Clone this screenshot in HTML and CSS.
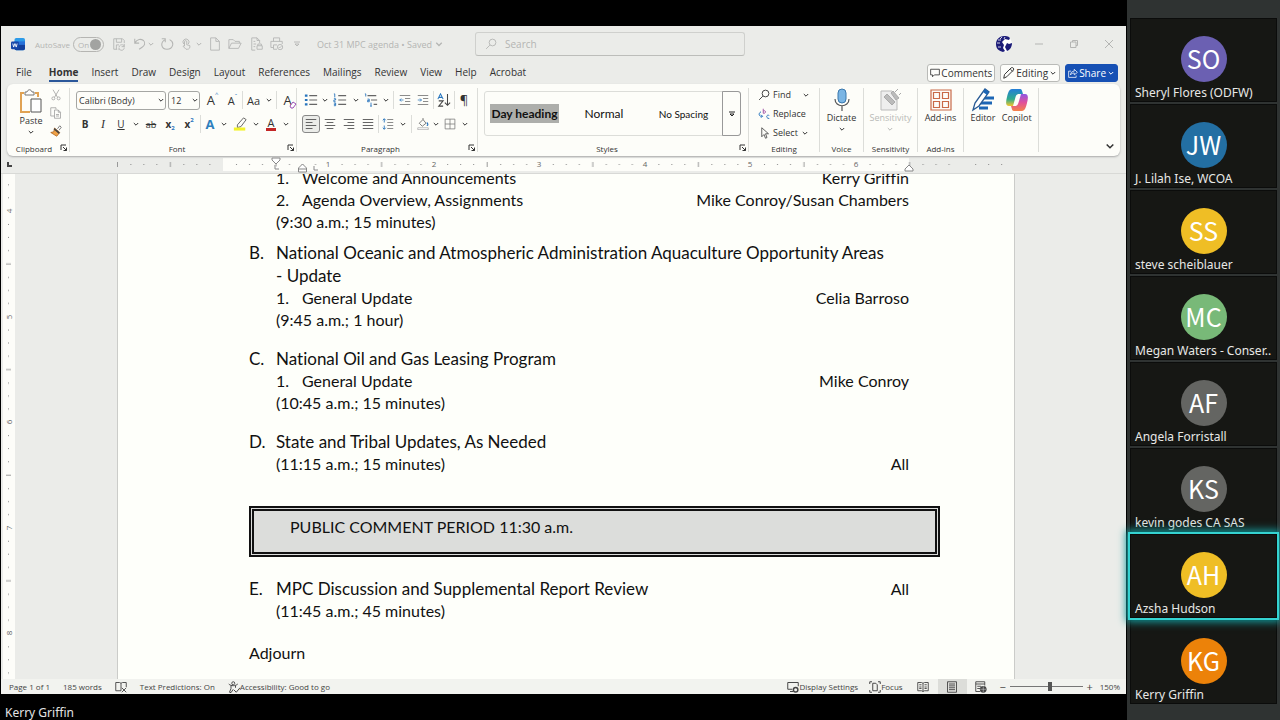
FILE: index.html
```html
<!DOCTYPE html>
<html lang="en">
<head>
<meta charset="utf-8">
<title>Oct 31 MPC agenda</title>
<link rel="stylesheet" href="styles.css">
</head>
<body>
<svg class="defs" aria-hidden="true">
  <symbol id="chev" viewBox="0 0 8 8"><path d="M1.800 3 4 5.200 6.200 3" fill="none" stroke="currentColor" stroke-width="1"/></symbol>
  <symbol id="launch" viewBox="0 0 8 8"><path d="M1 6V1h5M3 3l3.500 3.500M6.500 3.500v3h-3" fill="none" stroke="currentColor"/></symbol>
  <symbol id="save" viewBox="0 0 16 16"><path d="M6 14H2V2h10l2 2v3M5 2v4h6V2M5 14V9h3M8 12c0-4 6-4 6-1M14 8v3h-3M14 12c0 4-5 4-6 1M8 15v-2" fill="none" stroke="currentColor"/></symbol>
  <symbol id="undo" viewBox="0 0 16 16"><path d="M2 2v5h5M2 7c3-5 7-5 10-3 3 3 1 6-2 8l-3 2" fill="none" stroke="currentColor" stroke-width="1.200"/></symbol>
  <symbol id="redo" viewBox="0 0 16 16"><path d="M2 2h4v4M6 3C0 6 1 14 8 14s9-8 3-11" fill="none" stroke="currentColor" stroke-width="1.200"/></symbol>
  <symbol id="touch" viewBox="0 0 16 16"><path d="M5 8a4 4 0 1 1 6 0M6 11V5c0-2 3-2 3 0v4l4 1c1 3-1 5-3 5H8l-4-4 2-1" fill="none" stroke="currentColor" stroke-width="1.200"/></symbol>
  <symbol id="page" viewBox="0 0 16 16"><path d="M3 1h6l4 4v10H3zM9 1v4h4" fill="none" stroke="currentColor"/></symbol>
  <symbol id="folder" viewBox="0 0 16 16"><path d="M1 13V3h5l2 2h5v2M1 13 4 7h11l-3 6z" fill="none" stroke="currentColor"/></symbol>
  <symbol id="preview" viewBox="0 0 16 16"><path d="M6 15H2V1h6l3 3v3M8 1v3h3M4 5h2M4 8h3M8 10h6v4H8zM9 10V8h4v2M4 11h2" fill="none" stroke="currentColor"/></symbol>
  <symbol id="print" viewBox="0 0 16 16"><path d="M4 5V1h7v4M4 12H1V5h13v3M4 9h4M4 9v5h4" fill="none" stroke="currentColor"/><circle cx="11.500" cy="11.500" r="3" fill="none" stroke="currentColor"/><path d="m10 11.500 1 1 2-2" fill="none" stroke="currentColor"/></symbol>
  <symbol id="more" viewBox="0 0 8 8"><path d="M1 2h6M2 4h4L4 6z" fill="none" stroke="currentColor" stroke-width=".9"/></symbol>
  <symbol id="lens" viewBox="0 0 16 16"><circle cx="10" cy="6" r="4.500" fill="none" stroke="currentColor" stroke-width="1.200"/><path d="m6.500 9.500-5 5" stroke="currentColor" stroke-width="1.200"/></symbol>
  <symbol id="scissors" viewBox="0 0 16 16"><path d="m4 1 6 10M12 1 6 11" stroke="currentColor"/><circle cx="4.500" cy="12.500" r="2" fill="none" stroke="currentColor"/><circle cx="11.500" cy="12.500" r="2" fill="none" stroke="currentColor"/></symbol>
  <symbol id="copy" viewBox="0 0 16 16"><path d="M6 12H1V1h7v2M6 4h5l3 3v8H6zM11 4v3h3M8 10h4M8 12h4" fill="none" stroke="currentColor"/></symbol>
  <symbol id="brush" viewBox="0 0 16 16"><path d="m10 5 3-4 2 2-3 4" fill="#fff" stroke="#555"/><path d="M6 4 13 10 9 15 1 10l4-1z" fill="#f0a247" stroke="#a9601c"/><path d="m6 4 7 6-1 2-7-6z" fill="#444"/></symbol>
  <symbol id="paste" viewBox="0 0 26 26"><path d="M6 4H3v19h9M17 4h3v4" fill="none" stroke="#e0a254" stroke-width="2"/><path d="M7 6V3h2c1-3 4-3 5 0h2v3z" fill="#fff" stroke="#777"/><path d="M13 10h10v13H13z" fill="#fff" stroke="#555"/></symbol>
  <symbol id="bullets" viewBox="0 0 16 16"><path d="M6 3h9M6 8h9M6 13h9" stroke="#666" stroke-width="1.200"/><path d="M1 3h3M1 8h3M1 13h3" stroke="#2774bd" stroke-width="2.500"/></symbol>
  <symbol id="numbers" viewBox="0 0 16 16"><path d="M6 3h9M6 8h9M6 13h9" stroke="#666" stroke-width="1.200"/><path d="M1 1h1v4M1 6.500h2v1.500H1v2h2M1 11.500h2v3H1M1 13h2" fill="none" stroke="#2774bd"/></symbol>
  <symbol id="multi" viewBox="0 0 16 16"><path d="M4 3h10M8 8h7M11 13h4" stroke="#666" stroke-width="1.200"/><path d="M1 1h1v3M4 7h2v3H4V8.500h2M8 11v4M9 15H7" fill="none" stroke="#2774bd"/></symbol>
  <symbol id="outdent" viewBox="0 0 16 16"><path d="M1 2h14M8 6h7M8 10h7M1 14h14" stroke="#666"/><path d="M6 8H1M3 6 1 8l2 2" fill="none" stroke="#2774bd"/></symbol>
  <symbol id="indent" viewBox="0 0 16 16"><path d="M1 2h14M8 6h7M8 10h7M1 14h14" stroke="#666"/><path d="M1 8h5M4 6l2 2-2 2" fill="none" stroke="#2774bd"/></symbol>
  <symbol id="sort" viewBox="0 0 16 16"><path d="m1 7 3-6 3 6M2 5h4" fill="none" stroke="#2774bd" stroke-width="1.200"/><path d="M2 9h5l-5 6h5M12 1v13M9 11l3 3 3-3" fill="none" stroke="#444" stroke-width="1.200"/></symbol>
  <symbol id="al" viewBox="0 0 16 16"><path d="M1 2h14M1 6h9M1 10h14M1 14h9" stroke="#555" stroke-width="1.200"/></symbol>
  <symbol id="ac" viewBox="0 0 16 16"><path d="M1 2h14M3.500 6h9M1 10h14M3.500 14h9" stroke="#555" stroke-width="1.200"/></symbol>
  <symbol id="ar" viewBox="0 0 16 16"><path d="M1 2h14M6 6h9M1 10h14M6 14h9" stroke="#555" stroke-width="1.200"/></symbol>
  <symbol id="aj" viewBox="0 0 16 16"><path d="M1 2h14M1 6h14M1 10h14M1 14h14" stroke="#555" stroke-width="1.200"/></symbol>
  <symbol id="spacing" viewBox="0 0 16 16"><path d="M7 2h8M7 6h8M7 10h8M7 14h8" stroke="#666"/><path d="M3 1v5M3 10v5M1 3l2-2 2 2M1 13l2 2 2-2" fill="none" stroke="#2774bd" stroke-width="1.200"/></symbol>
  <symbol id="shade" viewBox="0 0 16 16"><path d="m3 7 5-5 4 5-5 4zM8 2V0" fill="none" stroke="#555"/><path d="M13 6c2 2 2 4 0 4" fill="none" stroke="#2774bd" stroke-width="1.500"/><path d="M1 13h14v2.500H1z" fill="#fff" stroke="#888" stroke-width=".7"/></symbol>
  <symbol id="borders" viewBox="0 0 16 16"><path d="M1.500 1.500h13v13h-13zM8 1.500v13M1.500 8h13" fill="none" stroke="#777"/></symbol>
  <symbol id="replace" viewBox="0 0 16 16"><path d="M7 1v6M7 4c4-2 4 4 0 3" fill="none" stroke="#a457a8" stroke-width="1.300"/><path d="M4 5C0 7 1 12 6 11M4 9l2 2-2 2M15 10c-4-2-5 4 0 4" fill="none" stroke="#2774bd" stroke-width="1.300"/></symbol>
  <symbol id="cursor" viewBox="0 0 16 16"><path d="M5 1v12l3-3 2 5 2-1-2-5h4z" fill="none" stroke="#444" stroke-width="1.100"/></symbol>
  <symbol id="mic" viewBox="0 0 24 24"><rect x="8" y="1" width="8" height="14" rx="4" fill="#7ab5e4" stroke="#3a78ad"/><path d="M5 11c0 9 14 9 14 0M12 18v5" fill="none" stroke="#555" stroke-width="1.200"/></symbol>
  <symbol id="sens" viewBox="0 0 24 24"><path d="M14 3H3v19h16V12" fill="#eee" stroke="#bbb"/><path d="m6 9 3-3 8 8-3 3zM13 5l2-2 6 7-3 2zM17 4l3-3M21 7l2-2" fill="#bbb" stroke="#aaa"/></symbol>
  <symbol id="addins" viewBox="0 0 24 24"><path d="M2 2h20v20H2z M4.500 4.500h6v6h-6z M13.500 4.500h6v6h-6z M4.500 13.500h6v6h-6z M13.500 13.500h6v6h-6z" fill="none" stroke="#c96a48" stroke-width="1.200"/></symbol>
  <symbol id="editor" viewBox="0 0 24 24"><path d="M12 10h11M9 15h12M8 20h9" stroke="#1d66b5" stroke-width="3"/><path d="M2 22 4 15 14 1l4 3L8 18z" fill="#fff" stroke="#285a94" stroke-width="1.300"/><path d="m14 1 4 3-2 3-4-3z" fill="#1d66b5"/></symbol>
  <linearGradient id="cg1" x1="0" y1="0" x2="0" y2="1"><stop stop-color="#247ed8"/><stop offset=".6" stop-color="#2fac8c"/><stop offset="1" stop-color="#f5c52c"/></linearGradient>
  <linearGradient id="cg2" x1="0" y1="0" x2="0" y2="1"><stop stop-color="#8e57e3"/><stop offset=".5" stop-color="#e0509b"/><stop offset="1" stop-color="#f58148"/></linearGradient>
  <symbol id="copilot" viewBox="0 0 24 24"><path d="M7 1h8c2 0 2 2 3 5h-4c-2 0-3 1-4 5l-2 7H4c-4 0-3-5-2-9s2-8 5-8z" fill="url(#cg1)"/><path d="M17 23H9c-2 0-2-2-3-5h4c2 0 3-1 4-5l2-7h4c4 0 3 5 2 9s-2 8-5 8z" fill="url(#cg2)"/></symbol>
  <symbol id="comment" viewBox="0 0 16 16"><path d="M1 2h14v9H7l-3 3v-3H1z" fill="none" stroke="currentColor" stroke-width="1.300"/></symbol>
  <symbol id="pencil" viewBox="0 0 16 16"><path d="m1 15 1-5 9-9c2-1 4 1 3 3l-9 9zM10 3l3 3" fill="none" stroke="currentColor" stroke-width="1.300"/></symbol>
  <symbol id="share" viewBox="0 0 16 16"><path d="M5 5H1v10h12v-3M4 11c0-4 3-6 6-6V2l5 5-5 4V8C7 8 5 9 4 11z" fill="none" stroke="currentColor" stroke-width="1.200"/></symbol>
  <symbol id="proof" viewBox="0 0 16 16"><path d="M8 3v10M8 13H1V2h5l2 1 2-1h5v6M9 9l6 6M15 9l-6 6" fill="none" stroke="currentColor" stroke-width="1.200"/></symbol>
  <symbol id="access" viewBox="0 0 16 16"><circle cx="7" cy="3" r="2" fill="none" stroke="currentColor" stroke-width="1.200"/><path d="M1 4c3 3 9 3 12 0M4 6v4l-2 5 2 .5L7 11M10 6v3M8 12l3 3 5-6" fill="none" stroke="currentColor" stroke-width="1.300"/></symbol>
  <symbol id="display" viewBox="0 0 16 16"><path d="M7 11H1V2h14v5M4 14h4" fill="none" stroke="currentColor" stroke-width="1.300"/><circle cx="11.500" cy="11.500" r="3" fill="none" stroke="currentColor" stroke-width="2"/></symbol>
  <symbol id="focus" viewBox="0 0 16 16"><path d="M1 4V1h3M12 1h3v3M1 12v3h3M12 15h3v-3M5 3h4l2 2v8H5z" fill="none" stroke="currentColor" stroke-width="1.300"/></symbol>
  <symbol id="book" viewBox="0 0 16 16"><path d="M8 3v11M1 2h5l2 1 2-1h5v11h-5l-2 1-2-1H1zM3 5h3M3 8h3M3 10h3M10 5h3M10 8h3M10 10h3" fill="none" stroke="currentColor" stroke-width="1.200"/></symbol>
  <symbol id="layout" viewBox="0 0 16 16"><path d="M2 1h12v14H2zM4 4h8M4 6.500h8M4 9h8M4 11.500h8" fill="none" stroke="currentColor" stroke-width="1.200"/></symbol>
  <symbol id="web" viewBox="0 0 16 16"><path d="M7 14H1V1h12v5M1 4h12M3 7h5M3 10h4" fill="none" stroke="currentColor" stroke-width="1.200"/><circle cx="11" cy="11" r="4.500" fill="currentColor"/><path d="M11 7v8M7 11h8" stroke="#ddd" stroke-width=".7"/></symbol>
</svg>

<div class="meeting">
  <main class="stage">
    <div class="word">
      <header class="titlebar">
        <div class="quick">
          <svg class="logo" viewBox="0 0 16 16"><rect x="4" y="1" width="12" height="14" rx="2" fill="#2d9be8"/><path d="M4 8h12v5a2 2 0 0 1-2 2H6a2 2 0 0 1-2-2z" fill="#123f9c"/><path d="M4 5h12v4H4z" fill="#2770d8"/><rect x="0" y="5" width="9" height="9" rx="1.500" fill="#1446a8"/><path d="m2 7.500 1 4 1.500-4 1.500 4 1-4" fill="none" stroke="#fff"/></svg>
          <label class="autosave" for="autosave">AutoSave</label>
          <button class="toggle" id="autosave">On<span class="knob"></span></button>
          <button aria-label="Save"><svg class="i14"><use href="#save"/></svg></button>
          <button aria-label="Undo"><svg class="i14"><use href="#undo"/></svg></button>
          <button aria-label="Undo list"><svg class="i8"><use href="#chev"/></svg></button>
          <button aria-label="Redo"><svg class="i14"><use href="#redo"/></svg></button>
          <button aria-label="Touch mode"><svg class="i12"><use href="#touch"/></svg></button>
          <button aria-label="Touch list"><svg class="i8"><use href="#chev"/></svg></button>
          <button aria-label="New"><svg class="i14"><use href="#page"/></svg></button>
          <button aria-label="Open"><svg class="i14"><use href="#folder"/></svg></button>
          <button aria-label="Preview"><svg class="i14"><use href="#preview"/></svg></button>
          <button aria-label="Print"><svg class="i14"><use href="#print"/></svg></button>
          <button aria-label="Customize"><svg class="i8"><use href="#more"/></svg></button>
          <button class="doc-title">Oct 31 MPC agenda • Saved <svg class="i10"><use href="#chev"/></svg></button>
        </div>
        <div class="search"><svg class="i12"><use href="#lens"/></svg><input type="text" placeholder="Search" aria-label="Search"></div>
        <div class="window-buttons">
          <svg class="user" viewBox="0 0 18 18"><circle cx="9" cy="9" r="8" fill="#fff"/><path d="M9 1C5 1 1 4 1 9s3 7 7 8l2-1-2-3 1-3-2-3 3-3 4 1 1-2C13 1 11 1 9 1z" fill="#1c1c78"/><path d="m12 8 2 1 3-1c0 4-2 7-5 8l-2-4z" fill="#1c1c78"/><path d="M3 5h3M2 8h3M3 12h3M7 2 5 4M10 2l-1 2" stroke="#fff" stroke-width=".8"/></svg>
          <button aria-label="Minimize"><svg viewBox="0 0 10 10"><path d="M1 5h8" stroke="currentColor"/></svg></button>
          <button aria-label="Restore"><svg viewBox="0 0 10 10"><path d="M1.500 3h5.500v5.500H1.500zM3.500 3V1.500H8.500v5H7" fill="none" stroke="currentColor"/></svg></button>
          <button aria-label="Close"><svg viewBox="0 0 10 10"><path d="m1 1 8 8M9 1 1 9" stroke="currentColor"/></svg></button>
        </div>
      </header>

      <nav class="tabs">
        <a href="#">File</a><a href="#" class="active">Home</a><a href="#">Insert</a><a href="#">Draw</a><a href="#">Design</a><a href="#">Layout</a><a href="#">References</a><a href="#">Mailings</a><a href="#">Review</a><a href="#">View</a><a href="#">Help</a><a href="#">Acrobat</a>
        <div class="tab-actions">
          <button class="outlined"><svg class="i10"><use href="#comment"/></svg>Comments</button>
          <button class="outlined"><svg class="i12"><use href="#pencil"/></svg>Editing<svg class="i8"><use href="#chev"/></svg></button>
          <button class="outlined share"><svg class="i10"><use href="#share"/></svg>Share<svg class="i8"><use href="#chev"/></svg></button>
        </div>
      </nav>

      <section class="ribbon">
        <div class="group clipboard">
          <div class="clip-body">
            <button class="big"><svg class="i26"><use href="#paste"/></svg>Paste<svg class="i8"><use href="#chev"/></svg></button>
            <div class="clip-side">
              <button aria-label="Cut" class="dim"><svg class="i12"><use href="#scissors"/></svg></button>
              <button aria-label="Copy" class="dim"><svg class="i12"><use href="#copy"/></svg></button>
              <button aria-label="Format painter"><svg class="i12"><use href="#brush"/></svg></button>
            </div>
          </div>
          <div class="caption">Clipboard<svg class="i8"><use href="#launch"/></svg></div>
        </div>
        <div class="group font">
          <div class="row font-one">
            <div class="combo"><select aria-label="Font"><option>Calibri (Body)</option></select><svg class="i8"><use href="#chev"/></svg></div>
            <div class="combo"><select aria-label="Font size"><option>12</option></select><svg class="i8"><use href="#chev"/></svg></div>
            <button class="letter">A<sup>^</sup></button>
            <button class="letter small">A<sup>ˇ</sup></button>
            <i class="sep"></i>
            <button class="letter small">Aa</button>
            <button aria-label="Case list"><svg class="i8"><use href="#chev"/></svg></button>
            <i class="sep"></i>
            <button class="letter eraser">A<svg class="i8" viewBox="0 0 8 8"><path d="m1 5 3-4 3 2-3 4H2z" fill="#fff" stroke="#9a4fb5"/></svg></button>
          </div>
          <div class="row font-two">
            <button class="b">B</button><button class="it">I</button><button class="u">U</button>
            <button aria-label="Underline list"><svg class="i8"><use href="#chev"/></svg></button>
            <button class="st">ab</button><button class="b">x<sub>2</sub></button><button class="b">x<sup>2</sup></button>
            <i class="sep"></i>
            <button class="effect">A</button>
            <button aria-label="Effects list"><svg class="i8"><use href="#chev"/></svg></button>
            <button aria-label="Highlight"><svg class="i14" viewBox="0 0 16 16"><path d="m5 9 7-8 3 2-6 8-4 1z" fill="none" stroke="#555"/><path d="M1 12h13v3.500H1z" fill="#f3f32a"/></svg></button>
            <button aria-label="Highlight list"><svg class="i8"><use href="#chev"/></svg></button>
            <button class="color">A</button>
            <button aria-label="Color list"><svg class="i8"><use href="#chev"/></svg></button>
          </div>
          <div class="caption">Font<svg class="i8"><use href="#launch"/></svg></div>
        </div>
        <div class="group paragraph">
          <div class="row para-one">
            <button aria-label="Bullets"><svg class="i14"><use href="#bullets"/></svg></button><button aria-label="Bullets list"><svg class="i8"><use href="#chev"/></svg></button>
            <button aria-label="Numbering"><svg class="i14"><use href="#numbers"/></svg></button><button aria-label="Numbering list"><svg class="i8"><use href="#chev"/></svg></button>
            <button aria-label="Multilevel"><svg class="i14"><use href="#multi"/></svg></button><button aria-label="Multilevel list"><svg class="i8"><use href="#chev"/></svg></button>
            <i class="sep"></i>
            <button aria-label="Decrease indent"><svg class="i12"><use href="#outdent"/></svg></button>
            <button aria-label="Increase indent"><svg class="i12"><use href="#indent"/></svg></button>
            <i class="sep"></i>
            <button aria-label="Sort"><svg class="i14"><use href="#sort"/></svg></button>
            <i class="sep"></i>
            <button class="letter">¶</button>
          </div>
          <div class="row para-two">
            <button class="pressed" aria-label="Left"><svg class="i12"><use href="#al"/></svg></button>
            <button aria-label="Center"><svg class="i12"><use href="#ac"/></svg></button>
            <button aria-label="Right"><svg class="i12"><use href="#ar"/></svg></button>
            <button aria-label="Justify"><svg class="i12"><use href="#aj"/></svg></button>
            <i class="sep"></i>
            <button aria-label="Line spacing"><svg class="i12"><use href="#spacing"/></svg></button><button aria-label="Spacing list"><svg class="i8"><use href="#chev"/></svg></button>
            <i class="sep"></i>
            <button aria-label="Shading"><svg class="i12"><use href="#shade"/></svg></button><button aria-label="Shading list"><svg class="i8"><use href="#chev"/></svg></button>
            <button aria-label="Borders"><svg class="i12"><use href="#borders"/></svg></button><button aria-label="Borders list"><svg class="i8"><use href="#chev"/></svg></button>
          </div>
          <div class="caption">Paragraph<svg class="i8"><use href="#launch"/></svg></div>
        </div>
        <div class="group styles">
          <div class="gallery">
            <button class="day"><span>Day heading</span></button><button>Normal</button><button class="nosp">No Spacing</button>
            <button class="expand" aria-label="More styles"><svg class="i8"><use href="#more"/></svg></button>
          </div>
          <div class="caption">Styles<svg class="i8"><use href="#launch"/></svg></div>
        </div>
        <div class="group editing">
          <div class="edit-list">
            <button><svg class="i12"><use href="#lens"/></svg>Find<svg class="i8 far"><use href="#chev"/></svg></button>
            <button><svg class="i12"><use href="#replace"/></svg>Replace</button>
            <button><svg class="i12"><use href="#cursor"/></svg>Select<svg class="i8"><use href="#chev"/></svg></button>
          </div>
          <div class="caption">Editing</div>
        </div>
        <div class="group voice"><button class="big"><svg class="i24"><use href="#mic"/></svg>Dictate<svg class="i8"><use href="#chev"/></svg></button><div class="caption">Voice</div></div>
        <div class="group sensitivity"><button class="big faded"><svg class="i24"><use href="#sens"/></svg>Sensitivity<svg class="i8"><use href="#chev"/></svg></button><div class="caption">Sensitivity</div></div>
        <div class="group addins"><button class="big"><svg class="i24"><use href="#addins"/></svg>Add-ins</button><div class="caption">Add-ins</div></div>
        <div class="group tools">
          <div class="tools-body"><button class="big"><svg class="i24"><use href="#editor"/></svg>Editor</button><button class="big"><svg class="i24"><use href="#copilot"/></svg>Copilot</button></div>
        </div>
        <button class="collapse" aria-label="Collapse ribbon"><svg class="i12"><use href="#chev"/></svg></button>
      </section>

      <svg class="ruler" aria-hidden="true">
        <defs><pattern id="ticks" x="222" y="0" width="105.600" height="16" patternUnits="userSpaceOnUse"><path d="M13 7.500h1M26 7.500h1M39 7.500h1M66 7.500h1M79 7.500h1M92 7.500h1" stroke="#888"/><path d="M53 5v5" stroke="#999"/></pattern></defs>
        <rect x="222" y="1" width="686" height="13" fill="#fdfdf9"/>
        <rect x="118" y="0" width="888" height="16" fill="url(#ticks)"/>
        <path d="M116.500 5v5" stroke="#999"/>
        <path d="M7 5v4h4" fill="none" stroke="#444" stroke-width="2"/>
        <g class="nums"><text x="327" y="10">1</text><text x="433" y="10">2</text><text x="538" y="10">3</text><text x="644" y="10">4</text><text x="749" y="10">5</text><text x="855" y="10">6</text></g>
        <path d="M271 1h8v2l-4 4-4-4zM274 8v4h4M297.500 15v-4l4-4 4 4v4zM297.500 12h8M313 9v4h4M904 12l4-4 4 4v2h-8z" fill="#fff" stroke="#888"/>
      </svg>

      <div class="canvas">
        <svg class="vruler" aria-hidden="true">
          <defs><pattern id="vticks" x="0" y="37" width="12" height="105.600" patternUnits="userSpaceOnUse"><path d="M5 13.500h1M5 26.500h1M5 39.500h1M5 66.500h1M5 79.500h1M5 92.500h1" stroke="#888"/><path d="M3 53h5" stroke="#999"/></pattern></defs>
          <rect width="12" height="1000" fill="url(#vticks)"/>
          <g class="nums"><text transform="translate(9 37) rotate(-90)">4</text><text transform="translate(9 143) rotate(-90)">5</text><text transform="translate(9 248) rotate(-90)">6</text><text transform="translate(9 354) rotate(-90)">7</text><text transform="translate(9 459) rotate(-90)">8</text></g>
        </svg>
        <article class="paper">
          <section class="block">
            <p class="item"><span>1.</span><span>Welcome and Announcements</span><span class="who">Kerry Griffin</span></p>
            <p class="item"><span>2.</span><span>Agenda Overview, Assignments</span><span class="who">Mike Conroy/Susan Chambers</span></p>
            <p class="time">(9:30 a.m.; 15 minutes)</p>
          </section>
          <section class="block near">
            <h2><span>B.</span><span>National Oceanic and Atmospheric Administration Aquaculture Opportunity Areas <span class="keep">- Update</span></span></h2>
            <p class="item"><span>1.</span><span>General Update</span><span class="who">Celia Barroso</span></p>
            <p class="time">(9:45 a.m.; 1 hour)</p>
          </section>
          <section class="block spaced">
            <h2><span>C.</span><span>National Oil and Gas Leasing Program</span></h2>
            <p class="item"><span>1.</span><span>General Update</span><span class="who">Mike Conroy</span></p>
            <p class="time">(10:45 a.m.; 15 minutes)</p>
          </section>
          <section class="block spaced">
            <h2><span>D.</span><span>State and Tribal Updates, As Needed</span></h2>
            <p class="time">(11:15 a.m.; 15 minutes)<span class="who">All</span></p>
          </section>
          <p class="public">PUBLIC COMMENT PERIOD 11:30 a.m.</p>
          <section class="block after-box">
            <h2><span>E.</span><span>MPC Discussion and Supplemental Report Review</span><span class="who">All</span></h2>
            <p class="time">(11:45 a.m.; 45 minutes)</p>
          </section>
          <p class="adjourn">Adjourn</p>
        </article>
      </div>

      <footer class="status">
        <span>Page 1 of 1</span><span>185 words</span><svg class="i12"><use href="#proof"/></svg><span>Text Predictions: On</span>
        <span class="with-icon"><svg class="i12"><use href="#access"/></svg>Accessibility: Good to go</span>
        <div class="status-right">
          <button class="display"><svg class="i12"><use href="#display"/></svg>Display Settings</button>
          <button class="focus"><svg class="i12"><use href="#focus"/></svg>Focus</button>
          <button class="view" aria-label="Read mode"><svg class="i12"><use href="#book"/></svg></button>
          <button class="view on" aria-label="Print layout"><svg class="i12"><use href="#layout"/></svg></button>
          <button class="view" aria-label="Web layout"><svg class="i12"><use href="#web"/></svg></button>
          <button class="step">−</button><input type="range" min="0" max="100" value="56" aria-label="Zoom"><button class="step">+</button>
          <span class="percent">150%</span>
        </div>
      </footer>
    </div>
    <div class="speaker">Kerry Griffin</div>
  </main>

  <aside class="people">
    <div class="tile"><span class="avatar purple">SO</span><span class="name">Sheryl Flores (ODFW)</span></div>
    <div class="tile"><span class="avatar blue">JW</span><span class="name">J. Lilah Ise, WCOA</span></div>
    <div class="tile"><span class="avatar yellow">SS</span><span class="name">steve scheiblauer</span></div>
    <div class="tile"><span class="avatar green">MC</span><span class="name">Megan Waters - Conser..</span></div>
    <div class="tile"><span class="avatar gray">AF</span><span class="name">Angela Forristall</span></div>
    <div class="tile"><span class="avatar gray">KS</span><span class="name">kevin godes CA SAS</span></div>
    <div class="tile talking"><span class="avatar yellow">AH</span><span class="name">Azsha Hudson</span></div>
    <div class="tile"><span class="avatar orange">KG</span><span class="name">Kerry Griffin</span></div>
  </aside>
</div>
</body>
</html>
```
FILE: styles.css
```css
* { box-sizing: border-box; }
body { margin: 0; background: #000; font-family: "Open Sans", "Noto Sans", sans-serif; font-size: 10px; color: #333; }
button, input, select { font: inherit; color: inherit; background: none; border: 0; padding: 0; margin: 0; }
button { display: flex; align-items: center; justify-content: center; white-space: nowrap; }
p, h2 { margin: 0; font-weight: 400; }
a { color: inherit; text-decoration: none; }
svg { flex: none; display: block; }
.defs { position: absolute; width: 0; height: 0; }
.i8 { width: 8px; height: 8px; }
.i10 { width: 10px; height: 10px; }
.i12 { width: 12px; height: 12px; }
.i14 { width: 14px; height: 14px; }
.i24 { width: 24px; height: 24px; }
.i26 { width: 26px; height: 26px; }

.meeting { display: flex; height: 100vh; overflow: hidden; }
.stage { flex: 1; min-width: 0; display: flex; flex-direction: column; padding-top: 26px; }
.word { flex: 1; min-height: 0; display: flex; flex-direction: column; background: #ebece9; margin: 0 1px; overflow: hidden; }
.speaker { height: 26px; padding: 10px 5px 0; font: 12px/17px "Noto Sans", sans-serif; color: #e4e4e4; }

.titlebar { display: flex; align-items: center; height: 36px; color: #b4b5b3; }
.quick { display: grid; grid-template-columns: 26px 38px 31px 29px 14px 8px 24px 13px 13px 19px 22px 22px 17px 24px 1fr; width: 474px; padding-left: 8px; align-items: center; flex: none; }
.logo { width: 14px; height: 14px; margin-left: 2px; }
.autosave { font-size: 8px; }
.toggle { height: 15px; border: 1px solid #b5b5b2; border-radius: 8px; font-size: 8px; justify-content: space-between; padding: 0 2px 0 4px; }
.knob { width: 11px; height: 11px; border-radius: 50%; background: #a2a3a1; }
.doc-title { justify-content: flex-start; padding-left: 8px; gap: 2px; font-size: 9px; }
.search { display: flex; align-items: center; gap: 8px; flex: 0 1 270px; height: 24px; padding: 0 9px; border: 1px solid #cfd0cd; border-bottom-color: #bcbdba; border-radius: 3px; }
.search input { min-width: 0; flex: 1; }
.search input::placeholder { color: #b4b5b3; opacity: 1; }
.window-buttons { display: flex; align-items: center; margin-left: auto; }
.window-buttons button { width: 35px; height: 20px; }
.window-buttons button svg { width: 10px; height: 10px; }
.user { width: 18px; height: 18px; margin-right: 8px; }

.tabs { display: flex; align-items: center; gap: 13px; height: 22px; padding: 0 8px 0 15px; }
.tabs a { line-height: 16px; border-bottom: 2px solid transparent; }
.tabs .active { font-weight: 700; border-color: #2b579a; margin-left: 4px; }
.tab-actions { display: flex; gap: 5px; margin-left: auto; }
.outlined { height: 18px; padding: 0 2px; gap: 1px; border: 1px solid #b9bab7; border-radius: 3px; background: #fdfdfa; }
.share { color: #fff; background: #1650b4; border-color: #1650b4; }

.ribbon { display: flex; height: 72px; margin: 0 6px; padding-top: 4px; background: #fdfdf9; border-radius: 6px; box-shadow: 0 1px 2px #aaa; flex: none; z-index: 1; }
.group { position: relative; display: flex; flex-direction: column; flex: none; border-right: 1px solid #dcddd9; height: 64px; }
.clipboard { width: 63px; }
.font { width: 227px; padding-left: 6px; }
.paragraph { width: 181px; padding-left: 5px; }
.styles { width: 271px; padding-left: 6px; }
.editing { width: 71px; padding-left: 9px; }
.voice { width: 44px; }
.sensitivity { width: 54px; }
.addins { width: 46px; }
.tools { width: 75px; }
.tools-body { display: flex; justify-content: space-evenly; }
.caption { display: flex; justify-content: center; align-items: center; margin-top: auto; font-size: 8px; line-height: 10px; height: 7px; }
.caption svg { position: absolute; right: 1px; bottom: 0; }
.clipboard .caption { padding-right: 8px; }
.font .caption, .paragraph .caption, .styles .caption { padding-right: 18px; }
.editing .caption { padding-right: 9px; }
.row { display: grid; align-items: center; justify-items: center; height: 24px; }
.sep { width: 1px; height: 18px; background: #dcddd9; }
.clip-body { display: flex; padding-left: 11px; }
.clip-side { display: flex; flex-direction: column; gap: 6px; padding: 1px 0 0 6px; }
.dim { color: #999; }
.big { display: flex; flex-direction: column; align-self: center; font-size: 9px; line-height: 12px; }
.big .i8 { margin-top: 1px; }
.faded { color: #b9bab7; }
.font-one { grid-template-columns: 92px 34px 21px 19px 1px 21px 9px 7px 20px; }
.font-two { grid-template-columns: 18px 18px 18px 12px 18px 20px 18px 4px 16px 12px 20px 12px 18px 12px; }
.para-one { grid-template-columns: 18px 9px 22px 9px 21px 9px 6px 17px 19px 3px 18px 2px 18px; }
.para-two { grid-template-columns: 18px 19px 19px 19px 2px 18px 11px 6px 17px 9px 20px 9px; }
.combo { display: grid; align-items: center; width: 100%; padding-right: 2px; }
.combo select, .combo svg { grid-area: 1 / 1; }
.combo select { appearance: none; width: 100%; height: 19px; border: 1px solid #a5a6a3; border-radius: 3px; padding-left: 2px; font-size: 9px; }
.combo svg { justify-self: end; margin-right: 1px; pointer-events: none; }
.letter { font-size: 13px; }
.small { font-size: 11px; }
.letter sup { font-size: 8px; line-height: 8px; align-self: flex-start; }
.eraser svg { align-self: flex-end; margin-left: -3px; }
.b { font-weight: 700; }
.it { font-family: "Liberation Serif", serif; font-style: italic; font-size: 12px; }
.u { text-decoration: underline; }
.st { text-decoration: line-through; font-size: 9px; }
.row sub, .row sup { font-size: 6px; line-height: 6px; color: #2774bd; }
.row sub { align-self: flex-end; }
.row sup { align-self: flex-start; }
.effect { font-size: 13px; font-weight: 700; line-height: 14px; color: #2f80bd; }
.color { font-size: 11px; line-height: 10px; border-bottom: 3px solid #c32626; padding: 0 2px; }
.pressed { width: 18px; height: 18px; border: 1px solid #888; border-radius: 3px; background: #ebece9; }
.gallery { display: grid; grid-template-columns: 79px 80px 1fr 17px; width: 257px; height: 45px; margin-top: 3px; border: 1px solid #dcddd9; border-radius: 3px; font: 12px Lato, sans-serif; color: #111; }
.day { font-weight: 700; }
.day span { background: #adaeab; line-height: 19px; padding: 0 1px; }
.nosp { font-size: 10px; }
.expand { border: 1px solid #999; border-radius: 0 3px 3px 0; margin: -1px; }
.edit-list { display: grid; grid-template-rows: repeat(3, 19px); margin-top: -3px; }
.edit-list button { justify-content: flex-start; gap: 3px; font-size: 9px; }
.far { margin-left: 8px; }
.collapse { margin: auto 4px 4px auto; }

.ruler { width: 100%; height: 17px; margin-top: 1px; border-bottom: 1px solid #d8d9d6; }
.nums { font-size: 8px; fill: #666; text-anchor: middle; }
.canvas { flex: 1; min-height: 0; display: flex; overflow: hidden; }
.vruler { width: 12px; height: 100%; margin-left: 2px; background: #fdfdf9; }
.paper { flex: 0 1 898px; margin-left: 102px; padding: 0 105px 0 131px; height: 100%; overflow: hidden; background: #fefffa; border: solid #cbccc9; border-width: 0 1px; font: 16px/22px Lato, sans-serif; font-variant-ligatures: none; color: #111; }
.block:first-child { margin-top: -7px; }
.item { display: grid; grid-template-columns: 26px 1fr auto; padding-left: 27px; }
.time { display: flex; padding-left: 27px; }
.who { margin-left: auto; font-size: 16px; }
h2 { display: flex; font-size: 17px; line-height: 23px; }
h2 > span:first-child { width: 27px; flex: none; }
.keep { white-space: nowrap; }
.near { margin-top: 8px; }
.spaced { margin-top: 16px; }
.public { margin: 31px -31px 0 0; height: 51px; padding: 5px 36px; border: 5px double #111; background: #dcdddb; }
.after-box { margin-top: 20px; }
.adjourn { margin-top: 20px; }

.status { display: flex; align-items: center; gap: 13px; height: 15px; flex: none; padding-left: 8px; background: #f2f3ef; font-size: 8px; line-height: 14px; white-space: nowrap; color: #444; }
.with-icon { display: flex; align-items: center; }
.status-right { display: flex; align-items: center; margin-left: auto; padding-right: 6px; height: 100%; }
.focus { margin: 0 6px 0 11px; }
.view { width: 29px; height: 15px; }
.on { background: #dcddd9; }
.step { width: 14px; font-size: 11px; }
.percent { margin-left: 3px; }
input[type="range"] { appearance: none; width: 73px; height: 11px; background: linear-gradient(#777, #777) center / 100% 1px no-repeat; }
input[type="range"]::-webkit-slider-thumb { appearance: none; width: 4px; height: 9px; background: #555; }

.people { width: 153px; flex: none; padding: 18px 3px 0; background: #2f3332; }
.tile { display: flex; flex-direction: column; align-items: center; height: 84px; margin-bottom: 2px; padding-top: 17px; background: #161714; border: 1px solid #0b0c0b; position: relative; }
.avatar { width: 46px; height: 46px; padding-bottom: 3px; border-radius: 50%; display: grid; place-items: center; font: 25px/26px "Noto Sans CJK SC", sans-serif; color: #fff; }
.name { align-self: stretch; padding-left: 4px; font: 12px/16px "Noto Sans", sans-serif; color: #e8e8e6; margin-top: 3px; white-space: nowrap; }
.talking { outline: 2px solid #35d3d1; box-shadow: 0 0 8px 4px #149a9c; z-index: 1; }
.purple { background: #6b60b2; }
.blue { background: #236fa3; }
.yellow { background: #efbe25; }
.green { background: #78b978; }
.gray { background: #646562; }
.orange { background: #ec8209; }
```
